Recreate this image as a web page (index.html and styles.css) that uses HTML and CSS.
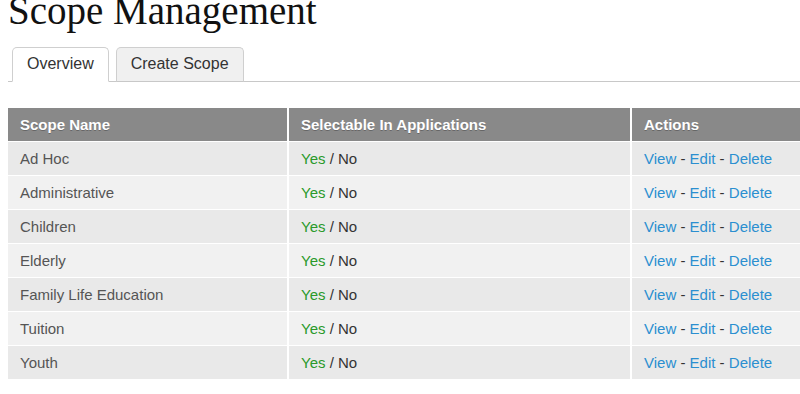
FILE: index.html
```html
<!DOCTYPE html>
<html>
<head>
    <title>Scope Management</title>
    <link rel="stylesheet" href="styles.css">
</head>
<body>
    <h1>Scope Management</h1>

    <ul class="tabs">
        <li class="tab active"><a href="#">Overview</a></li>
        <li class="tab"><a href="#">Create Scope</a></li>
    </ul>

    <table class="scopes">
        <colgroup>
            <col class="col-name">
            <col class="col-select">
            <col class="col-actions">
        </colgroup>
        <thead>
            <tr>
                <th>Scope Name</th>
                <th>Selectable In Applications</th>
                <th>Actions</th>
            </tr>
        </thead>
        <tbody>
            <tr>
                <td>Ad Hoc</td>
                <td><span class="yes">Yes</span> / No</td>
                <td><a href="#">View</a> - <a href="#">Edit</a> - <a href="#">Delete</a></td>
            </tr>
            <tr>
                <td>Administrative</td>
                <td><span class="yes">Yes</span> / No</td>
                <td><a href="#">View</a> - <a href="#">Edit</a> - <a href="#">Delete</a></td>
            </tr>
            <tr>
                <td>Children</td>
                <td><span class="yes">Yes</span> / No</td>
                <td><a href="#">View</a> - <a href="#">Edit</a> - <a href="#">Delete</a></td>
            </tr>
            <tr>
                <td>Elderly</td>
                <td><span class="yes">Yes</span> / No</td>
                <td><a href="#">View</a> - <a href="#">Edit</a> - <a href="#">Delete</a></td>
            </tr>
            <tr>
                <td>Family Life Education</td>
                <td><span class="yes">Yes</span> / No</td>
                <td><a href="#">View</a> - <a href="#">Edit</a> - <a href="#">Delete</a></td>
            </tr>
            <tr>
                <td>Tuition</td>
                <td><span class="yes">Yes</span> / No</td>
                <td><a href="#">View</a> - <a href="#">Edit</a> - <a href="#">Delete</a></td>
            </tr>
            <tr>
                <td>Youth</td>
                <td><span class="yes">Yes</span> / No</td>
                <td><a href="#">View</a> - <a href="#">Edit</a> - <a href="#">Delete</a></td>
            </tr>
        </tbody>
    </table>
</body>
</html>
```

FILE: styles.css
```css
body {
    margin: 0 0 0 8px;
    font-family: 'Liberation Sans', Arial, sans-serif;
    font-size: 15px;
    color: #333;
    background: white;
    overflow: hidden;
}

h1 {
    margin: -8px 0 0;
    font-family: 'Liberation Serif', Georgia, serif;
    font-size: 39px;
    line-height: 38px;
    font-weight: normal;
    color: #111;
}

/* Tabs */
.tabs {
    list-style: none;
    margin: 17px 0 26px;
    padding: 0 0 0 4px;
    display: flex;
    gap: 7px;
    border-bottom: 1px solid #c8c8c8;
}

.tab {
    margin-bottom: -1px;
}

.tab a {
    display: block;
    padding: 0 14px;
    height: 33px;
    line-height: 31px;
    font-size: 16px;
    color: #333;
    text-decoration: none;
    background: #f0f0f0;
    border: 1px solid #cfcfcf;
    border-bottom-color: #c8c8c8;
    border-radius: 5px 5px 0 0;
}

.tab.active a {
    background: white;
    border-bottom-color: white;
}

/* Table */
.scopes {
    width: 100%;
    table-layout: fixed;
    border-collapse: separate;
    border-spacing: 0;
}

.col-name { width: 279px; }
.col-select { width: 343px; }

.scopes th {
    background: #898989;
    color: white;
    font-weight: bold;
    text-align: left;
    height: 33px;
    padding: 0 12px;
    text-shadow: 0 1px 0 rgba(0,0,0,0.25);
}

.scopes td {
    height: 33px;
    padding: 0 12px;
    border-top: 1px solid white;
    color: #333;
}

.scopes th + th,
.scopes td + td {
    border-left: 2px solid white;
}

.scopes td:first-child {
    color: #555;
}

.scopes tbody tr:nth-child(odd) td {
    background: #e9e9e9;
}

.scopes tbody tr:nth-child(even) td {
    background: #f1f1f1;
}

.yes {
    color: #2a9a2a;
}

.scopes a {
    color: #2b8fd0;
    text-decoration: none;
}
```
